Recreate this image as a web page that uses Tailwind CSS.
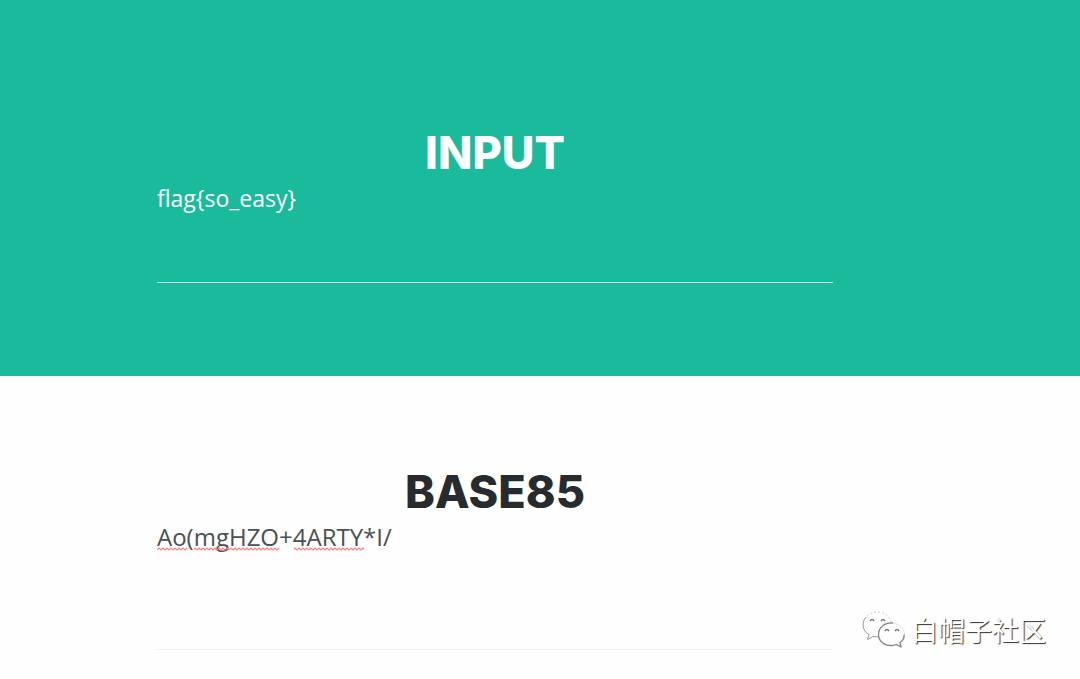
<!DOCTYPE html>
<html lang="en">
<head>
<meta charset="utf-8">
<meta name="viewport" content="width=device-width, initial-scale=1">
<title>Base85</title>
<script src="https://cdn.jsdelivr.net/npm/@tailwindcss/browser@4"></script>
</head>
<body class="relative min-h-screen overflow-hidden bg-[#fefefe] font-['Open_Sans',sans-serif]">
<main>
  <section class="bg-[#1abb9c] pt-32 pb-[93px] pl-[157px] pr-[247px]">
    <label for="plain" class="block text-center font-['Inter',sans-serif] text-[45px] leading-[50px] font-extrabold text-white">INPUT</label>
    <textarea id="plain" spellcheck="false" class="block h-[105px] w-full resize-none border-b border-[#d5e3dc] bg-transparent pt-1 text-[23px] leading-8 text-white outline-none">flag{so_easy}</textarea>
  </section>
  <section class="pt-[91px] pb-7 pl-[157px] pr-[247px]">
    <label for="encoded" class="block text-center font-['Inter',sans-serif] text-[45px] leading-[50px] font-extrabold text-[#282b2d]">BASE85</label>
    <div class="relative">
      <textarea id="encoded" spellcheck="false" class="block h-[133px] w-full resize-none border-b border-[#f0f0f0] bg-transparent pt-1 text-2xl leading-8 text-[#495057] outline-none">Ao(mgHZO+4ARTY*I/</textarea>
      <svg class="pointer-events-none absolute top-[30px] left-0" width="240" height="4" aria-hidden="true">
        <defs><pattern id="wave" width="4" height="4" patternUnits="userSpaceOnUse"><path d="M-1 2L0 3L2 1L4 3L5 2" fill="none" stroke="#ff7b7b" stroke-width="1.200"/></pattern></defs>
        <path d="M0 0h30v4H0zM37 0h85v4H37zM137 0h70v4h-70z" fill="url(#wave)"/>
      </svg>
    </div>
  </section>
</main>
<div class="absolute right-[34px] bottom-[29px] flex items-center gap-1.5">
  <svg width="43" height="38" viewBox="0 0 43 38" fill="none" aria-hidden="true">
    <g stroke-linejoin="round">
      <path d="M15 1C7 1 1 6.500 1 13.500C1 18 3.500 21.500 7 23.500L5.500 28.500L11 25.500C13 26 15 26.200 17 26C28 26 30 19 29.500 12C28.500 5.500 22.500 1 15 1Z" fill="#fefefe"/>
      <path d="M5 5C10 0 20 -.5 26 5L30 12" stroke="#d0d0d0" stroke-dasharray="2 2"/>
      <path d="M4 6C0 10 -.5 20 7 23.500L5.500 28.500L11 25.500L17 26" stroke="#999"/>
      <path d="M8 10q2-3 4 0M19 10q2-3 4 0" stroke="#777" stroke-width="1.500"/>
      <path d="M29.500 12C22 12 16.500 17 16.500 23.500C16.500 30 22 34.500 29 34.500Q32 34.500 34.500 33.500L39 36L38 31.500C41 29.500 42.500 27 42.500 23.500C42.500 17 37 12 29.500 12Z" fill="#fefefe" stroke="#e2e2e2"/>
      <path d="M31 12C22 11.500 16.500 17 16.500 23.500C16.500 30 22 34.500 29 34.500Q32 34.500 34.500 33.500L39 36L38 31.500C41 29.500 42.500 27 42 23.500" stroke="#858585" stroke-width="1.300"/>
      <path d="M23 20q2-3 4 0M33 20q2-3 4 0" stroke="#777" stroke-width="1.500"/>
    </g>
  </svg>
  <span lang="zh-CN" class="font-['Noto_Sans_CJK_SC',sans-serif] text-[27px] leading-10 text-white [text-shadow:1px_1px_1px_#333]">白帽子社区</span>
</div>
</body>
</html>
